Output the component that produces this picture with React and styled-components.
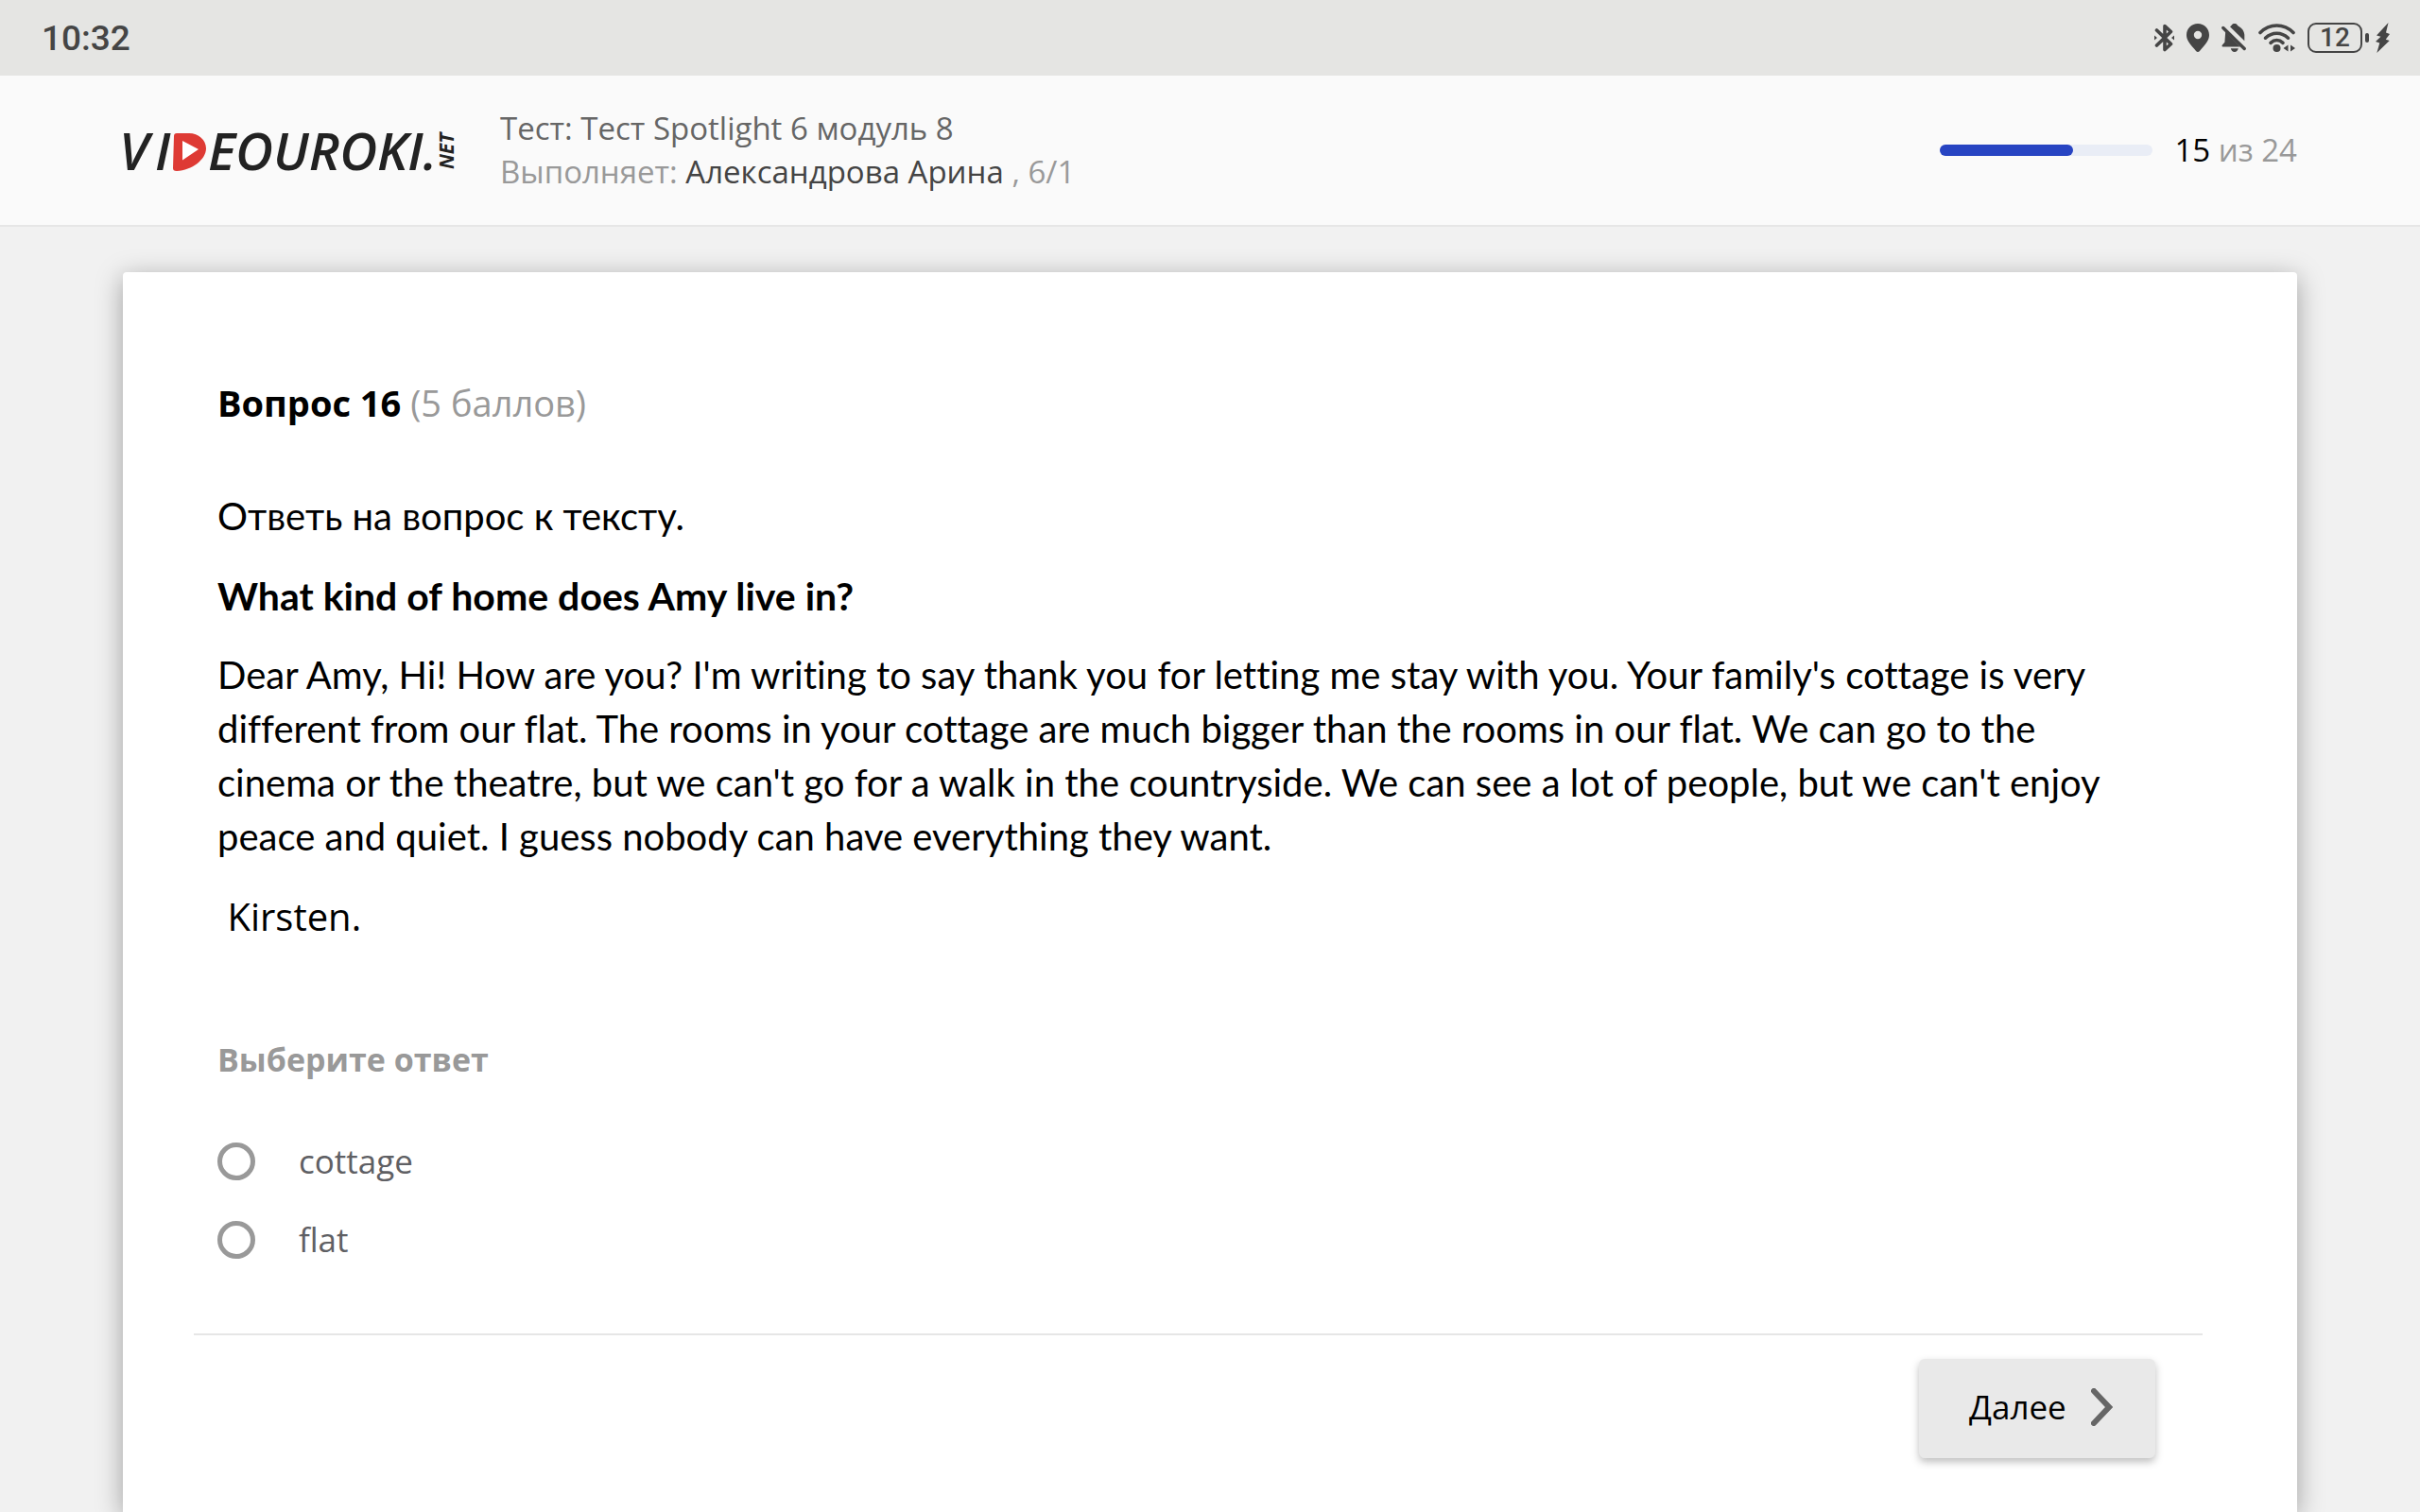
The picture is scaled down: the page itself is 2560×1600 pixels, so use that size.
import React, { useState } from 'react'
import styled, { createGlobalStyle } from 'styled-components'

const GlobalStyle = createGlobalStyle`
    * {
        box-sizing: border-box;
    }
    body {
        margin: 0;
        background-color: #f1f1f1;
        font-family: 'Open Sans', sans-serif;
        color: #000;
    }
`
const Page = styled.div`
    display: flex;
    flex-direction: column;
    min-height: 100vh;
`
const StatusBar = styled.div`
    display: flex;
    align-items: center;
    justify-content: space-between;
    height: 80px;
    padding: 0 32px 0 44px;
    background-color: #e5e5e3;
    color: #454545;
`
const Clock = styled.time`
    padding-top: 2px;
    font-family: Roboto, sans-serif;
    font-size: 37px;
    font-weight: 500;
    line-height: 46px;
`
const StatusIcons = styled.div`
    display: flex;
    align-items: center;
    gap: 13px;
`
const Power = styled.div`
    display: flex;
    align-items: center;
    gap: 7px;
`
const Battery = styled.div`
    display: flex;
    align-items: center;
    gap: 3px;
    &::after {
        content: '';
        width: 4px;
        height: 10px;
        border-radius: 2px;
        background-color: #454545;
    }
`
const BatteryLevel = styled.span`
    display: flex;
    align-items: center;
    justify-content: center;
    width: 58px;
    height: 32px;
    border: 2px solid #454545;
    border-radius: 9px;
    font-family: Roboto, sans-serif;
    font-size: 28px;
    font-weight: 500;
    line-height: 28px;
`
const Header = styled.header`
    display: flex;
    align-items: center;
    justify-content: space-between;
    height: 160px;
    padding: 0 130px;
    background-color: #fafafa;
    border-bottom: 2px solid #e6e6e6;
`
const HeaderInfo = styled.div`
    display: flex;
    align-items: center;
    gap: 38px;
`
const LogoLink = styled.a`
    display: flex;
    margin-left: -10px;
`
const LogoText = styled.text`
    font-family: 'Open Sans', sans-serif;
    font-size: ${props => (props.$small ? '21px' : '55px')};
    font-style: italic;
    font-weight: ${props => (props.$small ? 700 : 600)};
    fill: #222;
`
const TestInfo = styled.div`
    font-size: 33px;
    line-height: 46px;
    color: #999;
`
const TestName = styled.div`
    color: #666;
`
const Student = styled.span`
    color: #444;
`
const Progress = styled.div`
    display: flex;
    align-items: center;
    gap: 23px;
`
const ProgressTrack = styled.div`
    width: 225px;
    height: 12px;
    border-radius: 6px;
    background-color: #e9edf6;
`
const ProgressBar = styled.div`
    height: 12px;
    border-radius: 6px;
    background-color: #2744c2;
`
const ProgressText = styled.span`
    font-size: 33px;
    line-height: 46px;
    color: #999;
`
const ProgressCurrent = styled.span`
    color: #000;
`
const Main = styled.main`
    display: flex;
    flex: 1;
    padding: 48px 130px 0;
    overflow: hidden;
`
const Card = styled.form`
    flex: 1;
    padding: 110px 100px 0;
    background-color: #fff;
    border-radius: 4px 4px 0 0;
    box-shadow: 0 6px 28px rgba(0, 0, 0, 0.34);
`
const Title = styled.h1`
    margin: 0 0 64px;
    font-size: 38px;
    font-weight: 700;
    line-height: 56px;
`
const Points = styled.span`
    font-weight: 400;
    color: #999;
`
const Content = styled.section`
    padding-right: 90px;
    margin-bottom: 100px;
`
const Text = styled.p`
    margin: 0 0 27px;
    font-family: Lato, sans-serif;
    font-size: 40px;
    font-variant-ligatures: none;
    line-height: 57px;
    &:last-child {
        margin-bottom: 0;
    }
`
const Ask = styled(Text)`
    font-size: 41px;
    font-weight: 700;
`
const Sign = styled(Text)`
    font-family: 'Open Sans', sans-serif;
`
const Answers = styled.fieldset`
    display: flex;
    flex-direction: column;
    gap: 37px;
    margin: 0 0 76px;
    padding: 0;
    border: none;
`
const AnswersTitle = styled.legend`
    margin-bottom: 62px;
    padding: 0;
    font-size: 34px;
    font-weight: 700;
    line-height: 46px;
    color: #999;
`
const Answer = styled.label`
    display: flex;
    align-items: center;
    gap: 46px;
    font-size: 35px;
    line-height: 46px;
    color: #5f6064;
`
const Radio = styled.input`
    appearance: none;
    width: 40px;
    height: 40px;
    margin: 0;
    border: 5px solid #999;
    border-radius: 50%;
    background-color: #fff;
    &:checked {
        border-color: #2744c2;
        box-shadow: inset 0 0 0 6px #fff;
        background-color: #2744c2;
    }
`
const CardFooter = styled.footer`
    display: flex;
    justify-content: flex-end;
    margin-left: -25px;
    padding: 25px 50px 57px 0;
    border-top: 2px solid #e6e6e6;
`
const NextButton = styled.button`
    display: flex;
    align-items: center;
    gap: 26px;
    width: 250px;
    height: 105px;
    padding: 0 0 4px 53px;
    border: none;
    border-radius: 6px;
    background-color: #e9e9e9;
    box-shadow: 0 4px 8px rgba(0, 0, 0, 0.26);
    font-family: 'Open Sans', sans-serif;
    font-size: 35px;
    color: #000;
`

const BluetoothIcon = () => (
    <svg width='21' height='30' viewBox='0 0 21 30' fill='none' stroke='#454545' strokeWidth='3.6' strokeLinejoin='round' strokeLinecap='round'>
        <path d='M2.5 7 17.5 21.5 11 27.5V2.5L17.5 8.5 2.5 23' />
        <path d='M0 12.5 3 15 0 17.5ZM21 12.5 18 15 21 17.5Z' fill='#454545' strokeWidth='0' />
    </svg>
)
const PinIcon = () => (
    <svg width='24' height='30' viewBox='0 0 24 30' fill='#454545'>
        <path fillRule='evenodd' d='M12 0C5.2 0 0 5.2 0 12c0 5.5 3.8 9.6 8 14.5 1.5 1.7 2.6 3.5 4 3.5s2.5-1.8 4-3.5c4.2-4.9 8-9 8-14.500C24 5.2 18.8 0 12 0Zm0 7.8a4.2 4.2 0 1 1 0 8.400 4.2 4.2 0 0 1 0-8.400Z' />
    </svg>
)
// the gap between the slash and the bell is the bar's background
const BellOffIcon = () => (
    <svg width='26' height='30' viewBox='0 0 26 30' fill='#454545'>
        <path d='M9 3.2C10 2.5 10.5 2.2 11 1.3c.9-1.7 4.7-1.7 5.6 0 .4.9.8 1 1.9 1.7 3.6 2.2 5.5 5.2 5.8 8.8v6.400Z' />
        <path d='M4.2 8.5 19.8 24.500H1.500c-1.2 0-1.3-1.3-.4-2.200l2.3-2.500Z' />
        <path d='M9.8 26.300h8c-.6 2.3-2 3.7-4 3.700s-3.400-1.400-4-3.700Z' />
        <path d='M1.8 4.5 24.2 26.5' stroke='#454545' strokeWidth='3.4' strokeLinecap='round' />
    </svg>
)
const WifiIcon = () => (
    <svg width='39' height='30' viewBox='0 0 39 30' fill='none' stroke='#454545' strokeWidth='3.6' strokeLinecap='round'>
        <path d='M2 9.5C12-.5 27-.5 37 9.5' />
        <path d='M7.5 15.2c7-6.7 17-6.7 24 0' />
        <path d='M13 20.3c4-3.6 9-3.6 13 0' />
        <circle cx='19.5' cy='26' r='4' fill='#454545' stroke='none' />
        <path d='M31.5 22.5v7L26.5 26ZM34 22.5v7l5-3.5Z' fill='#454545' stroke='none' />
    </svg>
)
const BoltIcon = () => (
    <svg width='15' height='32' viewBox='0 0 15 32' fill='#454545'>
        <path d='M13.5 0 1 13.5l4.5 1.2L0 20l4.3 1.5L1.3 32 14.7 19l-4-1.3L15 12l-4-1.5Z' />
    </svg>
)
const Logo = () => (
    <svg width='371' height='80' viewBox='-10 -22 371 80' role='img' aria-label='Videouroki.net'>
        <LogoText x='-4' y='39'>V</LogoText>
        <LogoText x='34' y='39'>I</LogoText>
        <path fill='#de3a34' d='M57 0H70C80 0 88 7 88 16 88 28 73 39 57 40 54 40 53 39 53 37L54 3C54 1 55 0 57 0Z' />
        <path fill='#fff' d='M63 8V28.5L80 17Z' />
        <LogoText x='90' y='39'>EOUROKI.</LogoText>
        <LogoText $small x='-38' y='350' transform='rotate(-90)'>NET</LogoText>
    </svg>
)
const ChevronIcon = () => (
    <svg width='23' height='40' viewBox='0 0 23 40' fill='none' stroke='#666' strokeWidth='6' strokeLinecap='round'>
        <path d='M3 3 19 20 3 37' />
    </svg>
)

const answers = ['cottage', 'flat']
const current = 15
const total = 24

function App() {
    const [selected, setSelected] = useState('')
    return (
        <Page>
            <GlobalStyle />
            <StatusBar>
                <Clock>10:32</Clock>
                <StatusIcons>
                    <BluetoothIcon />
                    <PinIcon />
                    <BellOffIcon />
                    <WifiIcon />
                    <Power>
                        <Battery>
                            <BatteryLevel>12</BatteryLevel>
                        </Battery>
                        <BoltIcon />
                    </Power>
                </StatusIcons>
            </StatusBar>
            <Header>
                <HeaderInfo>
                    <LogoLink href='/'>
                        <Logo />
                    </LogoLink>
                    <TestInfo>
                        <TestName>Тест: Тест Spotlight 6 модуль 8</TestName>
                        <div>
                            Выполняет: <Student>Александрова Арина</Student> , 6/1
                        </div>
                    </TestInfo>
                </HeaderInfo>
                <Progress>
                    <ProgressTrack>
                        <ProgressBar style={{ width: `${(current / total) * 100}%` }} />
                    </ProgressTrack>
                    <ProgressText>
                        <ProgressCurrent>{current}</ProgressCurrent> из {total}
                    </ProgressText>
                </Progress>
            </Header>
            <Main>
                <Card onSubmit={event => event.preventDefault()}>
                    <Title>
                        Вопрос 16 <Points>(5 баллов)</Points>
                    </Title>
                    <Content>
                        <Text>Ответь на вопрос к тексту.</Text>
                        <Ask>What kind of home does Amy live in?</Ask>
                        <Text>
                            Dear Amy, Hi! How are you? I'm writing to say thank you for letting me stay with you. Your
                            family's cottage is very different from our flat. The rooms in your cottage are much bigger
                            than the rooms in our flat. We can go to the cinema or the theatre, but we can't go for a
                            walk in the countryside. We can see a lot of people, but we can't enjoy peace and quiet. I
                            guess nobody can have everything they want.
                        </Text>
                        <Sign>&nbsp;Kirsten.</Sign>
                    </Content>
                    <Answers>
                        <AnswersTitle>Выберите ответ</AnswersTitle>
                        {answers.map(answer => (
                            <Answer key={answer}>
                                <Radio
                                    type='radio'
                                    name='answer'
                                    value={answer}
                                    checked={selected === answer}
                                    onChange={() => setSelected(answer)}
                                />
                                {answer}
                            </Answer>
                        ))}
                    </Answers>
                    <CardFooter>
                        <NextButton type='submit'>
                            Далее
                            <ChevronIcon />
                        </NextButton>
                    </CardFooter>
                </Card>
            </Main>
        </Page>
    )
}

export default App
